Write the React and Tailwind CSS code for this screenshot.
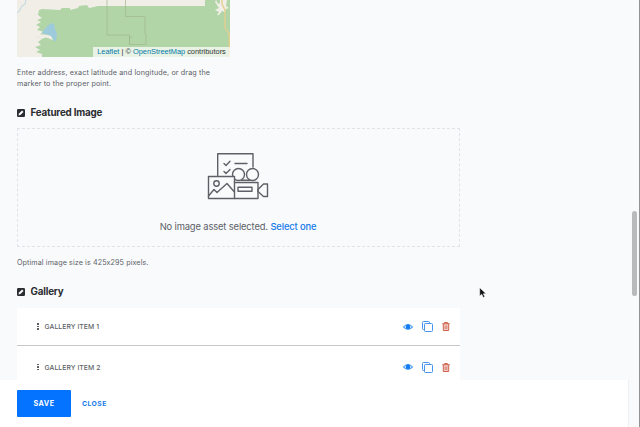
import React from 'react';

function MapPreview() {
  return (
    <div className="relative h-[57px] w-[213px] shrink-0 overflow-hidden bg-[#f1eee8]">
      <svg width="213" height="57" viewBox="0 0 213 57" className="block">
        <path
          d="M22 10L25 9L43 10L45 8H53V10L61 8L62 6L70 5L72 8L77 7L81 6H188V0H213V57H25V54L19 52L23 50L18 47L24 45L21 42L25 39L20 37L23 34L27 32L20 30L23 27L19 25L24 22L20 20L25 18L21 15Z"
          fill="#b2d5a8"
        />
        <path d="M24.500 33L31 25.500L35 23L37 24L38 29L40 34L39 41L37 41L34 36L30 34.500Z" fill="#9dcbdc" />
        <path d="M22 34L31 35L34 36L36 40L33 39L31 38L28 37.500L25 39L20 37Z" fill="#f1eee8" />
        <path
          d="M90 0V35H112.500V44.500H129V35.500L128 33V16.500H108.500V0M112.500 44.500V37H115"
          fill="none"
          stroke="#9eb78c"
          strokeWidth="1"
          opacity="0.7"
        />
        <path d="M9 0L8 4L5 6L3 10L0 13" fill="none" stroke="#c6dce2" strokeWidth="1.200" />
        <path
          d="M199 0L201 4L203 3V0H210L209 6L212 8L209 9L208 12L205 11L202 15L200 15L202 12L198 10L202 8L200 5L198 2Z"
          fill="#f1eee8"
        />
        <path d="M205 0V4L208 10V27L210 31L212.300 34V57" fill="none" stroke="#e4ce91" strokeWidth="1.400" />
      </svg>
      <div className="absolute right-0 bottom-0 flex h-[10px] w-[137px] items-center justify-center bg-white/70 font-['Liberation_Sans',sans-serif] text-[7.400px] leading-[10px] whitespace-pre text-[#333]">
        <a className="text-[#0078a8]">Leaflet</a>
        <span> | © </span>
        <a className="text-[#0078a8]">OpenStreetMap</a>
        <span> contributors</span>
      </div>
    </div>
  );
}

function FieldHeading({ children }) {
  return (
    <div className="flex h-[14px] items-center gap-[5.500px]">
      <svg width="8" height="8" viewBox="0 0 8 8" className="shrink-0">
        <rect width="8" height="8" rx="1.200" fill="#2b2d31" />
        <path d="M1.500 6.600L2 4.600L5.100 1.500L6.500 2.900L3.400 6.100Z" fill="#fafbfd" />
      </svg>
      <h2 className="text-[9.800px] leading-[14px] font-bold tracking-[-0.180px] text-[#2b2d31]">{children}</h2>
    </div>
  );
}

function AssetArt() {
  return (
    <svg
      width="62"
      height="48"
      viewBox="0 0 62 48"
      fill="none"
      stroke="#5d6066"
      strokeWidth="1.400"
      strokeLinejoin="round"
      strokeLinecap="round"
      className="mr-[2px] shrink-0"
    >
      <path d="M10.700 23.500V1.700H46V15" />
      <path d="M17 11.500L19 13.500L23 9.300M28 11.500H40M17 19.500L19 21.500L23 17.500" />
      <circle cx="31.500" cy="22.500" r="6" />
      <circle cx="45.500" cy="22.500" r="6" />
      <path d="M34.500 28.300H43" />
      <rect x="1.500" y="24.500" width="26" height="22" fill="#f9fafc" />
      <path d="M27.500 30.500H51V46.500H27.500" />
      <rect x="31" y="35.200" width="14" height="4" />
      <path d="M51 37.500L56.500 32H60.500V44.500H56.500L51 39.500Z" />
      <circle cx="9.500" cy="31.500" r="2.700" />
      <path d="M1.500 44L7 37.500L10 40.500L20 31.500L27 39.500" />
    </svg>
  );
}

function EyeIcon() {
  return (
    <svg width="10" height="8" viewBox="0 0 10 8">
      <path d="M0.400 4Q5 -1 9.600 4Q5 8.600 0.400 4Z" fill="#cfe3fb" stroke="#0f79ef" strokeWidth="0.900" />
      <circle cx="5" cy="3.900" r="2.200" fill="#0f79ef" />
    </svg>
  );
}

function CopyIcon() {
  return (
    <svg width="11" height="11" viewBox="0 0 11 11" fill="none" stroke="#3289ea" strokeWidth="0.900">
      <path d="M2.500 8.500H1.500Q0.500 8.500 0.500 7.500V1.500Q0.500 0.500 1.500 0.500H6.500Q7.500 0.500 7.500 1.500V2.300" />
      <rect x="2.500" y="2.500" width="8" height="8" rx="0.900" />
    </svg>
  );
}

function TrashIcon() {
  return (
    <svg width="8" height="9" viewBox="0 0 8 9" fill="none" stroke="#d0604b" strokeWidth="1">
      <path d="M1.500 2H6.500V8.500H1.500Z" fill="#f0cfc8" stroke="none" />
      <path d="M0.300 1.700H7.700M2.600 1.700V0.500H5.400V1.700M1.300 2V8.500H6.700V2" />
      <path d="M3.200 3.500V7M4.800 3.500V7" strokeWidth="0.700" />
    </svg>
  );
}

function GalleryItem({ label, className }) {
  return (
    <div className={`flex items-center bg-white pr-[10px] pl-[20px] ${className}`}>
      <div className="flex w-[7.500px] flex-col gap-[1px]">
        <i className="h-[1.400px] w-[1.600px] bg-[#5c5f66]" />
        <i className="h-[1.400px] w-[1.600px] bg-[#5c5f66]" />
        <i className="h-[1.400px] w-[1.600px] bg-[#5c5f66]" />
      </div>
      <span className="flex-1 pt-[1px] text-[6.800px] leading-[10px] font-medium tracking-[0.080px] text-[#5c5f66]">{label}</span>
      <div className="flex items-center">
        <EyeIcon />
        <span className="mr-[9px] ml-[9px]">
          <CopyIcon />
        </span>
        <TrashIcon />
      </div>
    </div>
  );
}

export default function App() {
  return (
    <div className="relative flex h-[427px] w-[640px] overflow-hidden bg-[#f9fafc] font-[Inter,sans-serif]">
      <div className="flex w-[629px] flex-col">
        <main className="h-[380px] shrink-0 overflow-hidden pl-[17px]">
          <MapPreview />
          <p className="mt-[10px] text-[7.200px] leading-[11px] tracking-[0.120px] whitespace-nowrap text-[#5c5f66]">
            Enter address, exact latitude and longitude, or drag the
            <br />
            marker to the proper point.
          </p>
          <div className="mt-[16.500px]">
            <FieldHeading>Featured Image</FieldHeading>
          </div>
          <div className="mt-[8.500px] flex h-[119px] w-[443px] flex-col items-center border border-dashed border-[#e1e3e6] pt-[22.500px]">
            <AssetArt />
            <p className="mt-[20px] mr-[1px] text-[9.400px] leading-[14px] tracking-[-0.140px] whitespace-nowrap text-[#5c5f66]">
              No image asset selected. <a className="font-medium text-[#1479e8]">Select one</a>
            </p>
          </div>
          <p className="mt-[10px] text-[7.200px] leading-[11px] tracking-[0.090px] text-[#5c5f66]">
            Optimal image size is 425x295 pixels.
          </p>
          <div className="mt-[17px]">
            <FieldHeading>Gallery</FieldHeading>
          </div>
          <div className="mt-[9px] w-[443px]">
            <GalleryItem label="GALLERY ITEM 1" className="h-[38px] border-b border-[#c5c7ca]" />
            <GalleryItem label="GALLERY ITEM 2" className="h-[42px]" />
          </div>
        </main>
        <footer className="flex h-[47px] items-start gap-[11px] border-r border-[#eeeff1] bg-white pt-[10px] pl-[17px]">
          <button className="h-[27px] w-[54px] rounded-[1px] bg-[#0473ff] pt-[2px] text-[7.200px] font-bold tracking-[0.500px] text-white">
            SAVE
          </button>
          <button className="h-[27px] pt-[2px] text-[6.800px] font-bold tracking-[0.450px] text-[#1479e8]">CLOSE</button>
        </footer>
      </div>
      <aside className="flex w-[10px] justify-center pt-[211px]">
        <div className="ml-[1px] h-[85px] w-[5px] rounded-full bg-[#b9babb]" />
      </aside>
      <div className="w-px bg-[#929394]" />
      <svg width="8" height="12" viewBox="0 0 8 12" className="absolute top-[287px] left-[479px]">
        <path d="M0.700 0.700V9L2.700 7.200L4.300 10.500L5.800 9.800L4.300 6.700H7Z" fill="#111" stroke="#fff" strokeWidth="0.500" />
      </svg>
    </div>
  );
}
